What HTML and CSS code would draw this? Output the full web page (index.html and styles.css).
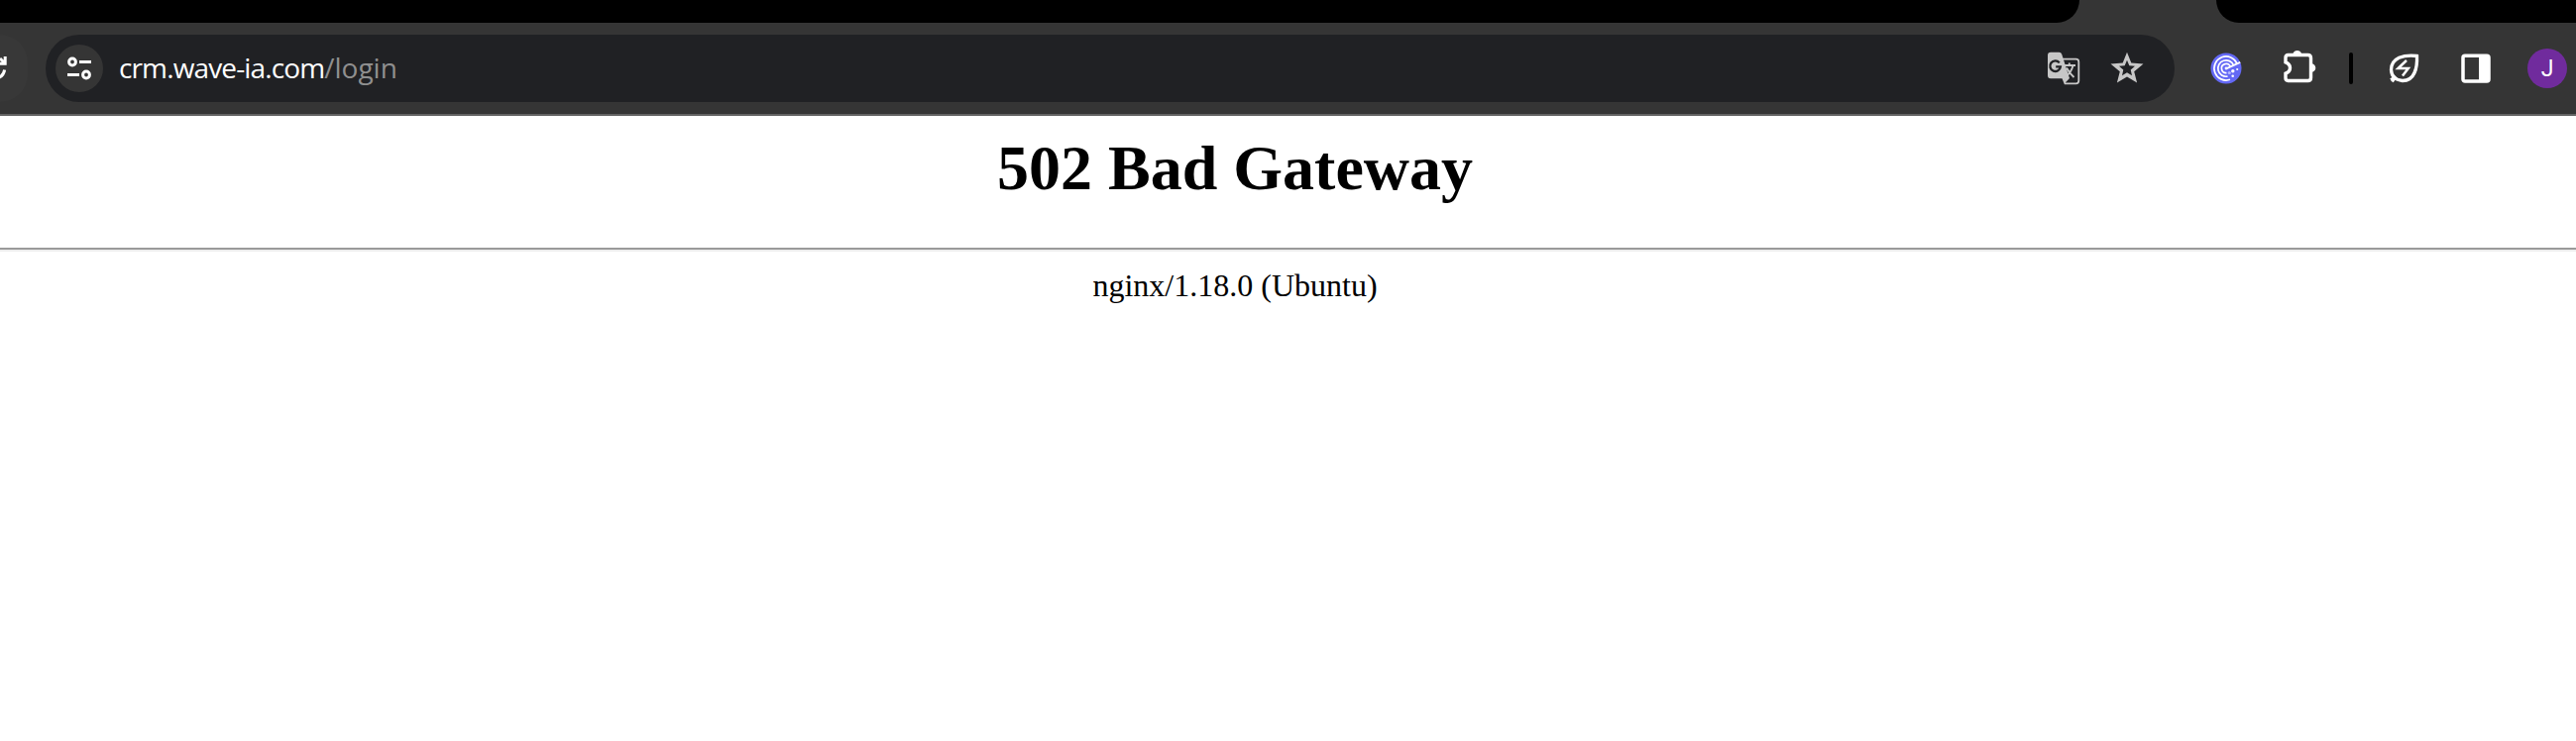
FILE: index.html
```html
<!DOCTYPE html>
<html lang="en">
<head>
<meta charset="utf-8">
<title>502 Bad Gateway</title>
<link rel="stylesheet" href="styles.css">
</head>
<body>
<header class="browser">
  <div class="tabs"><div class="tabs-left"></div><div class="tabs-right"></div></div>
  <div class="toolbar">
    <div class="reload">
      <svg width="28" height="68" viewBox="0 0 28 68"><path d="M0 29.200H5.200V22M0 24L5 29M4.600 35.500Q4 41-2 44" fill="none" stroke="#fff" stroke-width="3"/></svg>
    </div>
    <div class="omnibox">
      <div class="site-info">
        <svg width="48" height="48" viewBox="0 0 48 48" fill="none" stroke="#fff" stroke-width="3"><circle cx="17" cy="17.500" r="3.400"/><path d="M24 17.500H36M12 30.500H24"/><circle cx="31" cy="30.500" r="3.400"/></svg>
      </div>
      <div class="url"><span class="domain">crm.wave-ia.com</span><span class="path">/login</span></div>
      <svg class="translate" width="34" height="34" viewBox="0 0 34 34"><path d="M15 7.700H28.500Q31.300 7.700 31.300 10.500V29.500Q31.300 32.300 28.500 32.300H17.500L15 26" fill="none" stroke="#c7c7c7" stroke-width="1.800"/><path d="M3 .7H11.500Q13.500 .7 14.200 2.700L22 27L17.500 31.700L15.700 27.300H3Q0 27.300 0 24.300V3.700Q0 .7 3 .7Z" fill="#c7c7c7"/><path d="M11.800 11.400A5.300 5.300 0 1 0 12.900 15.300H8.200" fill="none" stroke="#202124" stroke-width="2.300"/><path d="M16.500 14H28M21.800 11.500V14M25.500 14.500Q23.500 21 18.800 25M19 16.500Q21.500 21.500 26.500 26" fill="none" stroke="#c7c7c7" stroke-width="1.900"/></svg>
      <svg class="star" width="34" height="34" viewBox="0 0 34 34"><path fill-rule="evenodd" d="M17 .8L21.300 11.500L33.500 12.500L24.200 20.300L27.100 31.500L17 25.500L6.900 31.500L9.800 20.300L.5 12.500L12.700 11.500ZM17 8.800L14.700 14.300L9 14.800L13.300 18.500L12 24.200L17 21.200L22 24.200L20.700 18.500L25 14.800L19.300 14.300Z" fill="#c7c7c7"/></svg>
    </div>
    <svg class="radar" width="32" height="32" viewBox="0 0 32 32"><circle cx="16" cy="16" r="15.500" fill="#6469f5"/><g fill="none" stroke="#fff" stroke-width="1.700"><path d="M27.100 11.500A12 12 0 1 0 20 27.300"/><path d="M23.600 13A8.200 8.200 0 1 0 17.500 24.100"/><path d="M20.300 14.300A4.600 4.600 0 1 0 16.500 20.600"/><path d="M16 16.300L30.200 9.900" stroke-width="1.900"/></g><g fill="#fff"><circle cx="16" cy="16" r="1.400"/><circle cx="22.800" cy="18.800" r="1.700"/><circle cx="27.200" cy="17" r="1.100"/><circle cx="22.700" cy="23.800" r="1.300"/><circle cx="19.300" cy="20.500" r="1.600" fill="#b4b7ff"/></g></svg>
    <svg class="puzzle" width="36" height="36" viewBox="0 0 36 36"><path d="M5.500 6.500H25.500Q28.500 6.500 28.500 9.500V29.500Q28.500 32.500 25.500 32.500H5.500Q3 32.500 3 30V25.200Q7.500 23.500 7.500 19.500T3 13.800V9Q3 6.500 5.500 6.500Z" fill="none" stroke="#fff" stroke-width="3.400"/><path d="M10.500 6V5A4.500 4.500 0 0 1 19 5V6ZM29 15.200A4.300 4.300 0 0 1 29 23.800Z" fill="#fff"/></svg>
    <div class="divider"></div>
    <svg class="leaf" width="32" height="32" viewBox="0 0 32 32" fill="none" stroke="#fff"><path d="M28.500 3.500Q18 2.200 10.500 5.300Q2.500 9 2.500 17.500Q3 27.500 14 28.500Q22.500 28.500 26 20.500Q29 14 28.500 3.500Z" stroke-width="3.300"/><path d="M7.500 24.500L2 27.500M3.500 29.500L6 26" stroke-width="3"/><path d="M18 8L9.500 16H19.800L14 23.500" stroke-width="2.500"/></svg>
    <svg class="panel" width="30" height="30" viewBox="0 0 30 30"><rect x="2" y="2.300" width="26" height="25.700" rx="2" fill="none" stroke="#fff" stroke-width="3.500"/><path d="M18 2H28V28H18Z" fill="#fff"/></svg>
    <div class="avatar">J</div>
  </div>
</header>
<main class="page">
  <h1 class="title">502 Bad Gateway</h1>
  <div class="rule"></div>
  <p class="server">nginx/1.18.0 (Ubuntu)</p>
</main>
</body>
</html>
```
FILE: styles.css
```css
* { box-sizing: border-box; }
body { margin: 0; background: #fff; overflow: hidden; }
svg { display: block; flex: none; }
.browser { height: 117px; background: #353535; border-bottom: 2px solid #636363; }
.tabs { display: flex; justify-content: space-between; height: 23px; }
.tabs-left { width: 2098px; background: #000; border-bottom-right-radius: 23px; }
.tabs-right { width: 363px; background: #000; border-bottom-left-radius: 23px; }
.toolbar { display: flex; align-items: center; height: 92px; }
.reload { width: 28px; height: 68px; background: #383838; border-radius: 0 34px 34px 0; margin-right: 18px; flex: none; }
.omnibox { display: flex; align-items: center; width: 2148px; height: 68px; padding-left: 10px; border-radius: 34px; background: #202124; flex: none; }
.site-info { width: 48px; height: 48px; border-radius: 50%; background: #353535; flex: none; }
.url { margin: -2px 0 0 16px; flex: 1; font: 28px/38px "Open Sans", "Noto Sans", sans-serif; white-space: pre; }
.domain { color: #fff; letter-spacing: -0.87px; }
.path { color: #8f8f8f; }
.translate { margin-right: 29px; }
.star { margin-right: 31px; }
.radar { margin-left: 36px; }
.puzzle { margin-left: 41px; margin-top: -4px; }
.divider { width: 4px; height: 32px; margin-left: 31px; border-radius: 2px; background: #000; flex: none; }
.leaf { margin-left: 36px; }
.panel { margin-left: 41px; }
.avatar { width: 40px; height: 40px; margin-left: 37px; border-radius: 50%; background: #702b9d; color: #fff; font: 23px/41px Roboto, sans-serif; text-align: center; flex: none; }
.page { font-family: "Liberation Serif", serif; color: #000; text-align: center; }
.title { margin: 0; padding: 16px 107px 0 0; height: 133px; font-size: 64px; line-height: 74px; font-weight: bold; }
.rule { height: 4px; background: #eee; border-top: 2px solid #9a9a9a; }
.server { margin: 0; padding: 16px 107px 0 0; font-size: 32px; line-height: 36px; }
```
